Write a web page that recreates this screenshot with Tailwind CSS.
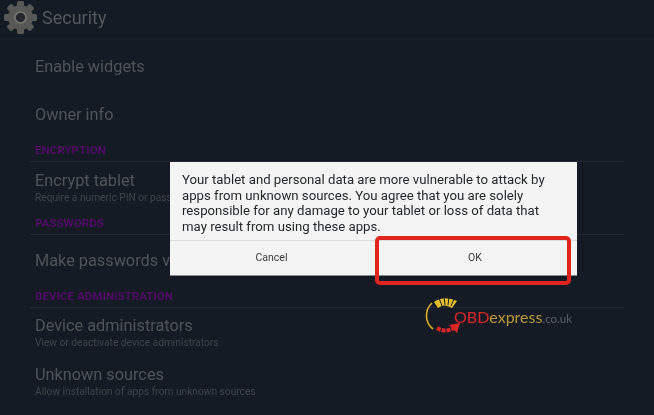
<!DOCTYPE html>
<html>
<head>
<meta charset="utf-8">
<script src="https://cdn.jsdelivr.net/npm/@tailwindcss/browser@4"></script>
</head>
<body class="m-0">
<div class="relative w-[654px] h-[415px] overflow-hidden bg-[#151b24] font-['Roboto',sans-serif]">
  <div class="flex flex-col blur-[0.5px]">
    <header class="h-[39px] flex items-center gap-[5px] pl-[4px] border-b border-[#1a2029] shrink-0 pb-[3px] overflow-hidden">
      <svg class="w-[33px] h-[33px] shrink-0" viewBox="0 0 33 33">
        <g fill="#585856">
          <rect x="13" y="0" width="7" height="33" rx="1.5"/>
          <rect x="13" y="0" width="7" height="33" rx="1.5" transform="rotate(45 16.5 16.5)"/>
          <rect x="13" y="0" width="7" height="33" rx="1.5" transform="rotate(90 16.5 16.5)"/>
          <rect x="13" y="0" width="7" height="33" rx="1.5" transform="rotate(135 16.5 16.5)"/>
          <circle cx="16.5" cy="16.5" r="12.5"/>
        </g>
        <circle cx="16.5" cy="16.5" r="5.5" fill="#24272c" stroke="#777775" stroke-width="1.5"/>
      </svg>
      <span class="text-[18px] leading-none text-[#55585c]">Security</span>
    </header>
    <div class="pl-[35px] pr-[30px] flex flex-col">
      <div class="h-[48px] mt-[4px] flex items-center text-[16.3px] text-[#50545a]">Enable widgets</div>
      <div class="h-[48px] flex items-center text-[16.3px] text-[#50545a]">Owner info</div>
      <div class="h-[21px] mt-[1px] flex items-center text-[11.6px] font-bold text-[#4e0a64]">ENCRYPTION</div>
      <div class="h-px bg-[#232932] -ml-[5px]"></div>
      <div class="h-[44px] pt-[9px] flex flex-col">
        <div class="text-[16.3px] leading-[20px] text-[#50545a]">Encrypt tablet</div>
        <div class="text-[10.2px] leading-[14px] text-[#3f444b]">Require a numeric PIN or pass</div>
      </div>
      <div class="h-[21px] mt-[7px] flex items-center text-[11.6px] font-bold text-[#4e0a64]">PASSWORDS</div>
      <div class="h-px bg-[#232932] -ml-[5px]"></div>
      <div class="h-[48px] mt-[2px] flex items-center text-[16.3px] text-[#50545a]">Make passwords v</div>
      <div class="h-[21px] mt-[1px] flex items-center text-[11.6px] font-bold text-[#4e0a64]">DEVICE ADMINISTRATION</div>
      <div class="h-px bg-[#232932] -ml-[5px]"></div>
      <div class="h-[44px] pt-[8px] flex flex-col">
        <div class="text-[16.3px] leading-[20px] text-[#50545a]">Device administrators</div>
        <div class="text-[10.2px] leading-[14px] text-[#3f444b]">View or deactivate device administrators</div>
      </div>
      <div class="h-[44px] mt-[5px] pt-[8px] flex flex-col">
        <div class="text-[16.3px] leading-[20px] text-[#50545a]">Unknown sources</div>
        <div class="text-[10.2px] leading-[14px] text-[#3f444b]">Allow installation of apps from unknown sources</div>
      </div>
    </div>
  </div>

  <div class="absolute left-[170px] top-[162px] w-[407px] h-[114px] bg-[#f4f4f4] flex flex-col blur-[0.3px] border-b border-[#888]">
    <p class="m-0 h-[78px] shrink-0 px-[12px] pt-[10px] text-[13.2px] leading-[15.5px] whitespace-nowrap text-[#26282a]">Your tablet and personal data are more vulnerable to attack by<br>apps from unknown sources. You agree that you are solely<br>responsible for any damage to your tablet or loss of data that<br>may result from using these apps.</p>
    <div class="flex-1 flex border-t border-[#dcdcdc] text-[10.5px] text-[#3a3a3a]">
      <div class="w-[203px] flex items-center justify-center">Cancel</div>
      <div class="flex-1 flex items-center justify-center">OK</div>
    </div>
  </div>
  <div class="absolute left-[375px] top-[236px] w-[196px] h-[49px] rounded-[5px] border-[4px] border-[#e0241f]"></div>

  <div class="absolute left-[424px] top-[296px] flex items-center blur-[0.3px]">
    <svg class="w-[38px] h-[39px] shrink-0" viewBox="0 0 38 39" fill="none">
      <path d="M8 7 A17 17 0 0 0 9 33" stroke="#d6ae2c" stroke-width="1.6"/>
      <path d="M10 6 Q20 -1 33 5 L28 12 Q20 7 14 12 Z" fill="#e3bd2e"/>
      <path d="M15 2l3 8M20 0l1 9M25 1l-1 8M30 3l-3 7" stroke="#151b24" stroke-width="1"/>
      <path d="M13 32 Q21 37 30 32" stroke="#dc2526" stroke-width="4" stroke-dasharray="4 1"/>
      <path d="M25 29 L36 27 L33 37 Z" fill="#dc2526"/>
    </svg>
    <div class="-ml-[8px] flex items-baseline text-[16px] leading-none mt-[3px] font-['Lato',sans-serif]">
      <span class="text-[#d8262a]">OBD</span><span class="text-[#b8983a]">express</span><span class="text-[11.5px] text-[#56626a]">.co.uk</span>
    </div>
  </div>
</div>
</body>
</html>
